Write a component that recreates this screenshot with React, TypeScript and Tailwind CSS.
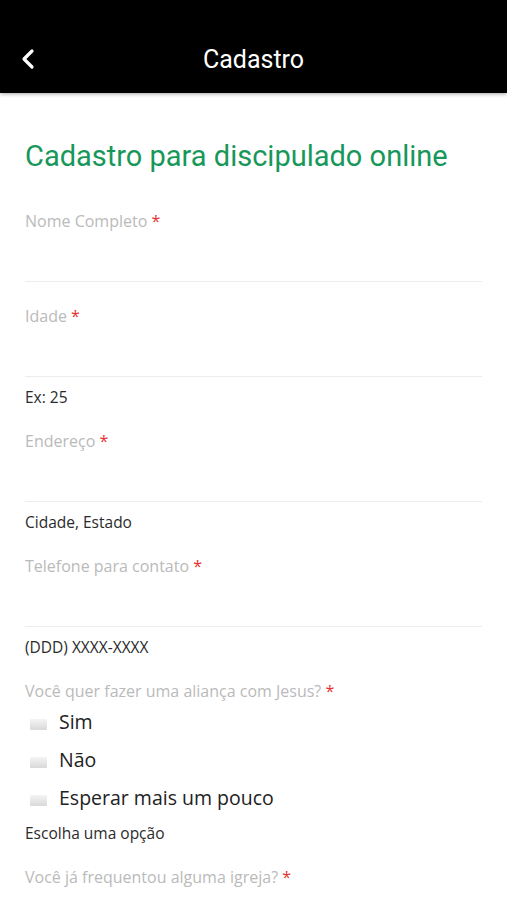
import { ChevronLeft } from "lucide-react";

const fields = [
  { label: "Nome Completo", help: "" },
  { label: "Idade", help: "Ex: 25" },
  { label: "Endereço", help: "Cidade, Estado" },
  { label: "Telefone para contato", help: "(DDD) XXXX-XXXX" },
];

const Label = ({ text }: { text: string }) => (
  <div className="h-5 text-[16px] leading-5 text-[#bababa]">
    {text} <span className="text-[#e8302e]">*</span>
  </div>
);

const TextField = ({ label, help }: { label: string; help: string }) => (
  <div className="mb-6">
    <Label text={label} />
    <div className="h-[51px] border-b border-[#ececec]" />
    {help && (
      <div className="mt-2.5 h-5 text-[15.5px] leading-5 text-[#2b2b2b]">{help}</div>
    )}
  </div>
);

const Options = ({ label, options, help }: { label: string; options: string[]; help: string }) => (
  <div className="mb-6">
    <Label text={label} />
    <div className="mt-0.5">
      {options.map((opt) => (
        <div key={opt} className="flex h-[38px] items-center">
          <span className="ml-[5px] mt-1 h-[11px] w-[17px] rounded-[1px] bg-gradient-to-b from-[#f4f4f4] to-[#d9d9d9]" />
          <span className="ml-3 text-[19.5px] text-[#222]">{opt}</span>
        </div>
      ))}
    </div>
    {help && <div className="mt-1.5 h-5 text-[15.5px] leading-5 text-[#2b2b2b]">{help}</div>}
  </div>
);

export default function App() {
  return (
    <div className="h-[900px] overflow-hidden bg-white font-['Open_Sans',sans-serif]">
      <header className="relative flex h-[93px] items-end bg-black pb-[17px] shadow-[0_1px_4px_rgba(0,0,0,0.35)]">
        <ChevronLeft className="absolute left-[12px] top-[43px] h-8 w-8 text-white" strokeWidth={2.4} />
        <h1 className="w-full text-center font-['Roboto',sans-serif] text-[25px] font-normal leading-8 text-white">
          Cadastro
        </h1>
      </header>
      <main className="px-[25px] pt-[47px]">
        <h2 className="mb-[39px] h-8 font-['Roboto',sans-serif] text-[29px] leading-8 text-[#17985a]">
          Cadastro para discipulado online
        </h2>
        {fields.map((f) => (
          <TextField key={f.label} label={f.label} help={f.help} />
        ))}
        <Options
          label="Você quer fazer uma aliança com Jesus?"
          options={["Sim", "Não", "Esperar mais um pouco"]}
          help="Escolha uma opção"
        />
        <Options label="Você já frequentou alguma igreja?" options={["Sim", "Não"]} help="" />
      </main>
    </div>
  );
}
